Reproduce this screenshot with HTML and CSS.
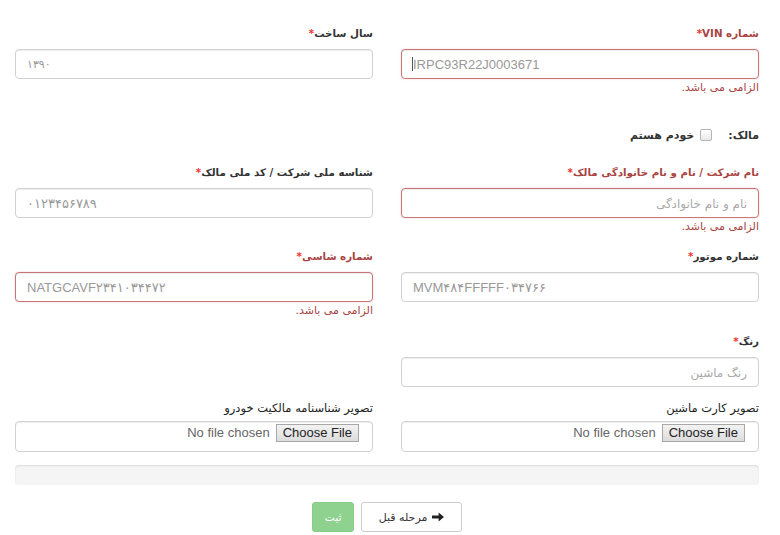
FILE: index.html
```html
<!DOCTYPE html>
<html lang="fa" dir="rtl">
<head>
<meta charset="utf-8">
<title>فرم خودرو</title>
<link rel="stylesheet" href="styles.css">
</head>
<body>
<form class="form">
  <div class="row r1">
    <div class="field">
      <label class="lbl err">شماره VIN<span class="req">*</span></label>
      <div class="caret-wrap">
        <input class="ctl ctl-err ltr" type="text" value="IRPC93R22J0003671">
        <span class="caret"></span>
      </div>
      <div class="help">الزامی می باشد.</div>
    </div>
    <div class="field">
      <label class="lbl">سال ساخت<span class="req">*</span></label>
      <input class="ctl ltr small" type="text" value="۱۳۹۰">
    </div>
  </div>

  <div class="owner">
    <span class="owner-lbl">مالک:</span>
    <span class="check"></span>
    <span class="owner-opt">خودم هستم</span>
  </div>

  <div class="row r3">
    <div class="field">
      <label class="lbl err">نام شرکت / نام و نام خانوادگی مالک<span class="req">*</span></label>
      <input class="ctl ctl-err" type="text" placeholder="نام و نام خانوادگی">
      <div class="help">الزامی می باشد.</div>
    </div>
    <div class="field">
      <label class="lbl">شناسه ملی شرکت / کد ملی مالک<span class="req">*</span></label>
      <input class="ctl ltr" type="text" value="۰۱۲۳۴۵۶۷۸۹">
    </div>
  </div>

  <div class="row r4">
    <div class="field">
      <label class="lbl">شماره موتور<span class="req">*</span></label>
      <input class="ctl ltr" type="text" value="MVM۴۸۴FFFFF۰۳۴۷۶۶">
    </div>
    <div class="field">
      <label class="lbl err">شماره شاسی<span class="req">*</span></label>
      <input class="ctl ctl-err ltr" type="text" value="NATGCAVF۲۳۴۱۰۳۴۴۷۲">
      <div class="help">الزامی می باشد.</div>
    </div>
  </div>

  <div class="row r5">
    <div class="field">
      <label class="lbl">رنگ<span class="req">*</span></label>
      <input class="ctl" type="text" placeholder="رنگ ماشین">
    </div>
    <div class="field"></div>
  </div>

  <div class="row r6">
    <div class="field">
      <label class="lbl plain">تصویر کارت ماشین</label>
      <div class="file-box"><span class="file-btn">Choose File</span><span class="file-name">No file chosen</span></div>
    </div>
    <div class="field">
      <label class="lbl plain">تصویر شناسنامه مالکیت خودرو</label>
      <div class="file-box"><span class="file-btn">Choose File</span><span class="file-name">No file chosen</span></div>
    </div>
  </div>

  <div class="progress"></div>

  <div class="actions">
    <button type="button" class="btn btn-prev">
      <svg class="arrow" viewBox="0 0 12 10" width="12" height="10"><path d="M0 3.6h6.6V0.6L12 5 6.6 9.4V6.4H0z" fill="#222"/></svg>
      <span>مرحله قبل</span>
    </button>
    <button type="button" class="btn btn-ok">ثبت</button>
  </div>
</form>
</body>
</html>
```

FILE: styles.css
```css
html, body {
  margin: 0;
  padding: 0;
  background: #fff;
}
body {
  direction: rtl;
  font-family: "DejaVu Sans", sans-serif;
  color: #333;
}
.form {
  padding: 25px 21px 0 15px;
}
.row {
  display: grid;
  grid-template-columns: 1fr 1fr;
  column-gap: 28px;
  align-items: start;
}
.r3 { margin-top: 20px; }
.r4 { margin-top: 13px; }
.r5 { margin-top: 14px; }
.r6 { margin-top: 13px; }
.lbl {
  display: block;
  font-size: 10.3px;
  font-weight: bold;
  line-height: 16px;
  margin-bottom: 8px;
  color: #333;
}
.lbl.err { color: #a94442; }
.lbl.plain {
  font-weight: normal;
  font-size: 11.5px;
  color: #222;
  margin-bottom: 5px;
}
.req { color: #e33; }
.ctl {
  display: block;
  width: 100%;
  height: 30px;
  box-sizing: border-box;
  border: 1px solid #d2d2d2;
  border-radius: 4px;
  padding: 0 11px;
  font-family: "Liberation Sans", "DejaVu Sans", sans-serif;
  font-size: 13px;
  color: #999;
  background: #fff;
  box-shadow: inset 0 1px 1px rgba(0,0,0,.075);
  outline: none;
  direction: rtl;
}
.ctl.ltr { direction: ltr; text-align: left; }
.ctl.small { font-size: 11px; }
.ctl::placeholder { color: #aaa; font-family: "DejaVu Sans", sans-serif; font-size: 12px; }
.ctl-err {
  border-color: #c97575;
  box-shadow: inset 0 1px 1px rgba(0,0,0,.075), 0 0 2px rgba(200,110,110,.35);
}
.caret-wrap { position: relative; }
.caret {
  position: absolute;
  left: 11px;
  top: 8px;
  width: 1px;
  height: 14px;
  background: #555;
}
.help {
  margin-top: 1px;
  font-size: 11px;
  line-height: 16px;
  color: #a94442;
}
.owner {
  margin-top: 30px;
  display: flex;
  align-items: center;
  height: 18px;
  font-size: 11px;
  font-weight: bold;
  color: #333;
}
.check {
  width: 10px;
  height: 10px;
  border: 1px solid #b5b5b5;
  border-radius: 2px;
  background: linear-gradient(#fff, #e8e8e8);
  margin: 0 16px 0 6px;
}
.file-box {
  display: flex;
  align-items: flex-start;
  gap: 6px;
  height: 31px;
  box-sizing: border-box;
  border: 1px solid #d2d2d2;
  border-radius: 4px;
  padding: 2px 13px 0 13px;
  box-shadow: inset 0 1px 1px rgba(0,0,0,.075);
  font-family: "Liberation Sans", sans-serif;
  font-size: 13px;
}
.file-btn {
  display: inline-block;
  height: 18px;
  line-height: 16px;
  box-sizing: border-box;
  padding: 0 6px;
  border: 1px solid #a8a8a8;
  background: linear-gradient(#f3f3f3, #dcdcdc);
  color: #222;
  direction: ltr;
}
.file-name {
  line-height: 18px;
  color: #666;
  direction: ltr;
}
.progress {
  margin-top: 13px;
  height: 20px;
  background: #f5f5f5;
  border-radius: 4px;
  box-shadow: inset 0 1px 2px rgba(0,0,0,.1);
}
.actions {
  margin-top: 17px;
  display: flex;
  justify-content: center;
  gap: 7px;
}
.btn {
  height: 30px;
  box-sizing: border-box;
  border-radius: 3px;
  font-family: "DejaVu Sans", sans-serif;
  font-size: 11px;
  padding: 0;
  display: flex;
  align-items: center;
  justify-content: center;
  cursor: pointer;
}
.btn-prev {
  width: 101px;
  background: #fff;
  border: 1px solid #ccc;
  color: #333;
  gap: 5px;
}
.btn-ok {
  width: 42px;
  background: #8fd18f;
  border: 1px solid #86cc86;
  color: #fff;
}
```
